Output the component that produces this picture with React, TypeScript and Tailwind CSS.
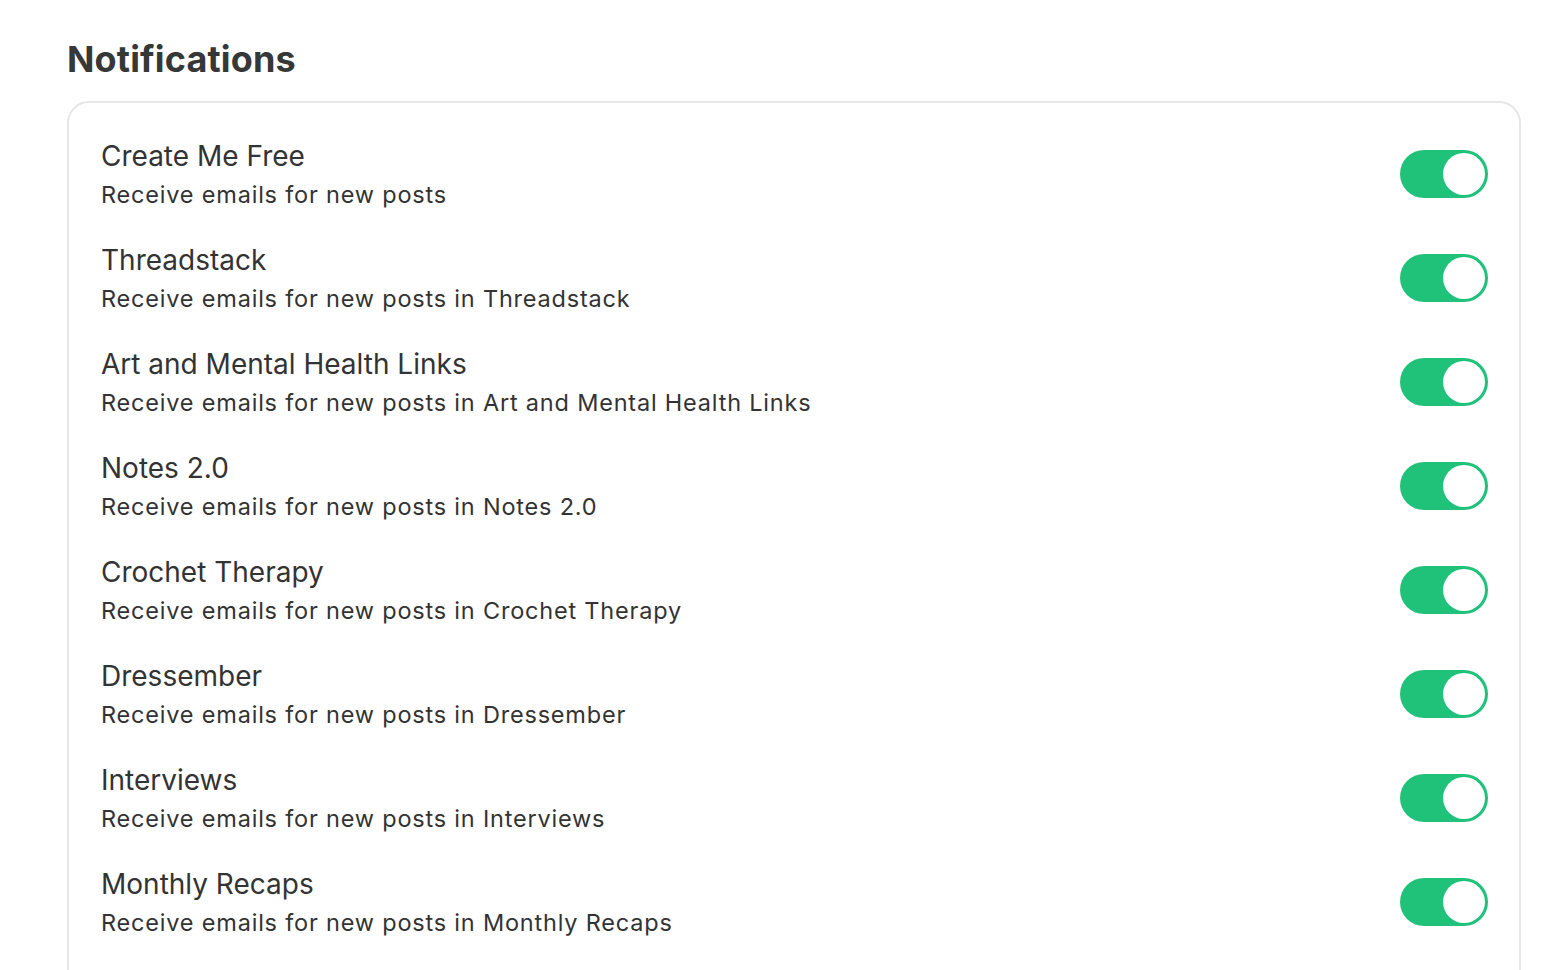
const publications = [
  { name: 'Create Me Free', note: 'Receive emails for new posts' },
  { name: 'Threadstack', note: 'Receive emails for new posts in Threadstack' },
  { name: 'Art and Mental Health Links', note: 'Receive emails for new posts in Art and Mental Health Links' },
  { name: 'Notes 2.0', note: 'Receive emails for new posts in Notes 2.0' },
  { name: 'Crochet Therapy', note: 'Receive emails for new posts in Crochet Therapy' },
  { name: 'Dressember', note: 'Receive emails for new posts in Dressember' },
  { name: 'Interviews', note: 'Receive emails for new posts in Interviews' },
  { name: 'Monthly Recaps', note: 'Receive emails for new posts in Monthly Recaps' },
];

function Toggle() {
  return (
    <div className="flex h-[48px] w-[88px] shrink-0 items-center justify-end rounded-full bg-[#20c27a] p-[3px]">
      <div className="h-[42px] w-[42px] rounded-full bg-white" />
    </div>
  );
}

export default function App() {
  return (
    <div
      className="min-h-[970px] bg-white pl-[67px] pr-[45px] pt-[39px] text-[#333333]"
      style={{ fontFamily: 'Inter, "Noto Sans", sans-serif' }}
    >
      <h1 className="text-[36px] font-bold leading-[40px] tracking-[0.15px] text-[#363737]">Notifications</h1>
      <div className="mt-[22px] rounded-[22px] border-2 border-[#e6e6e6] pl-[32px] pr-[31px] pb-[40px] pt-[19px]">
        {publications.map((p) => (
          <div key={p.name} className="flex h-[104px] items-center justify-between">
            <div>
              <div className="text-[28px] leading-[36px]">{p.name}</div>
              <div className="mt-[5px] text-[23.5px] leading-[32px] tracking-[0.8px]">{p.note}</div>
            </div>
            <Toggle />
          </div>
        ))}
      </div>
    </div>
  );
}
